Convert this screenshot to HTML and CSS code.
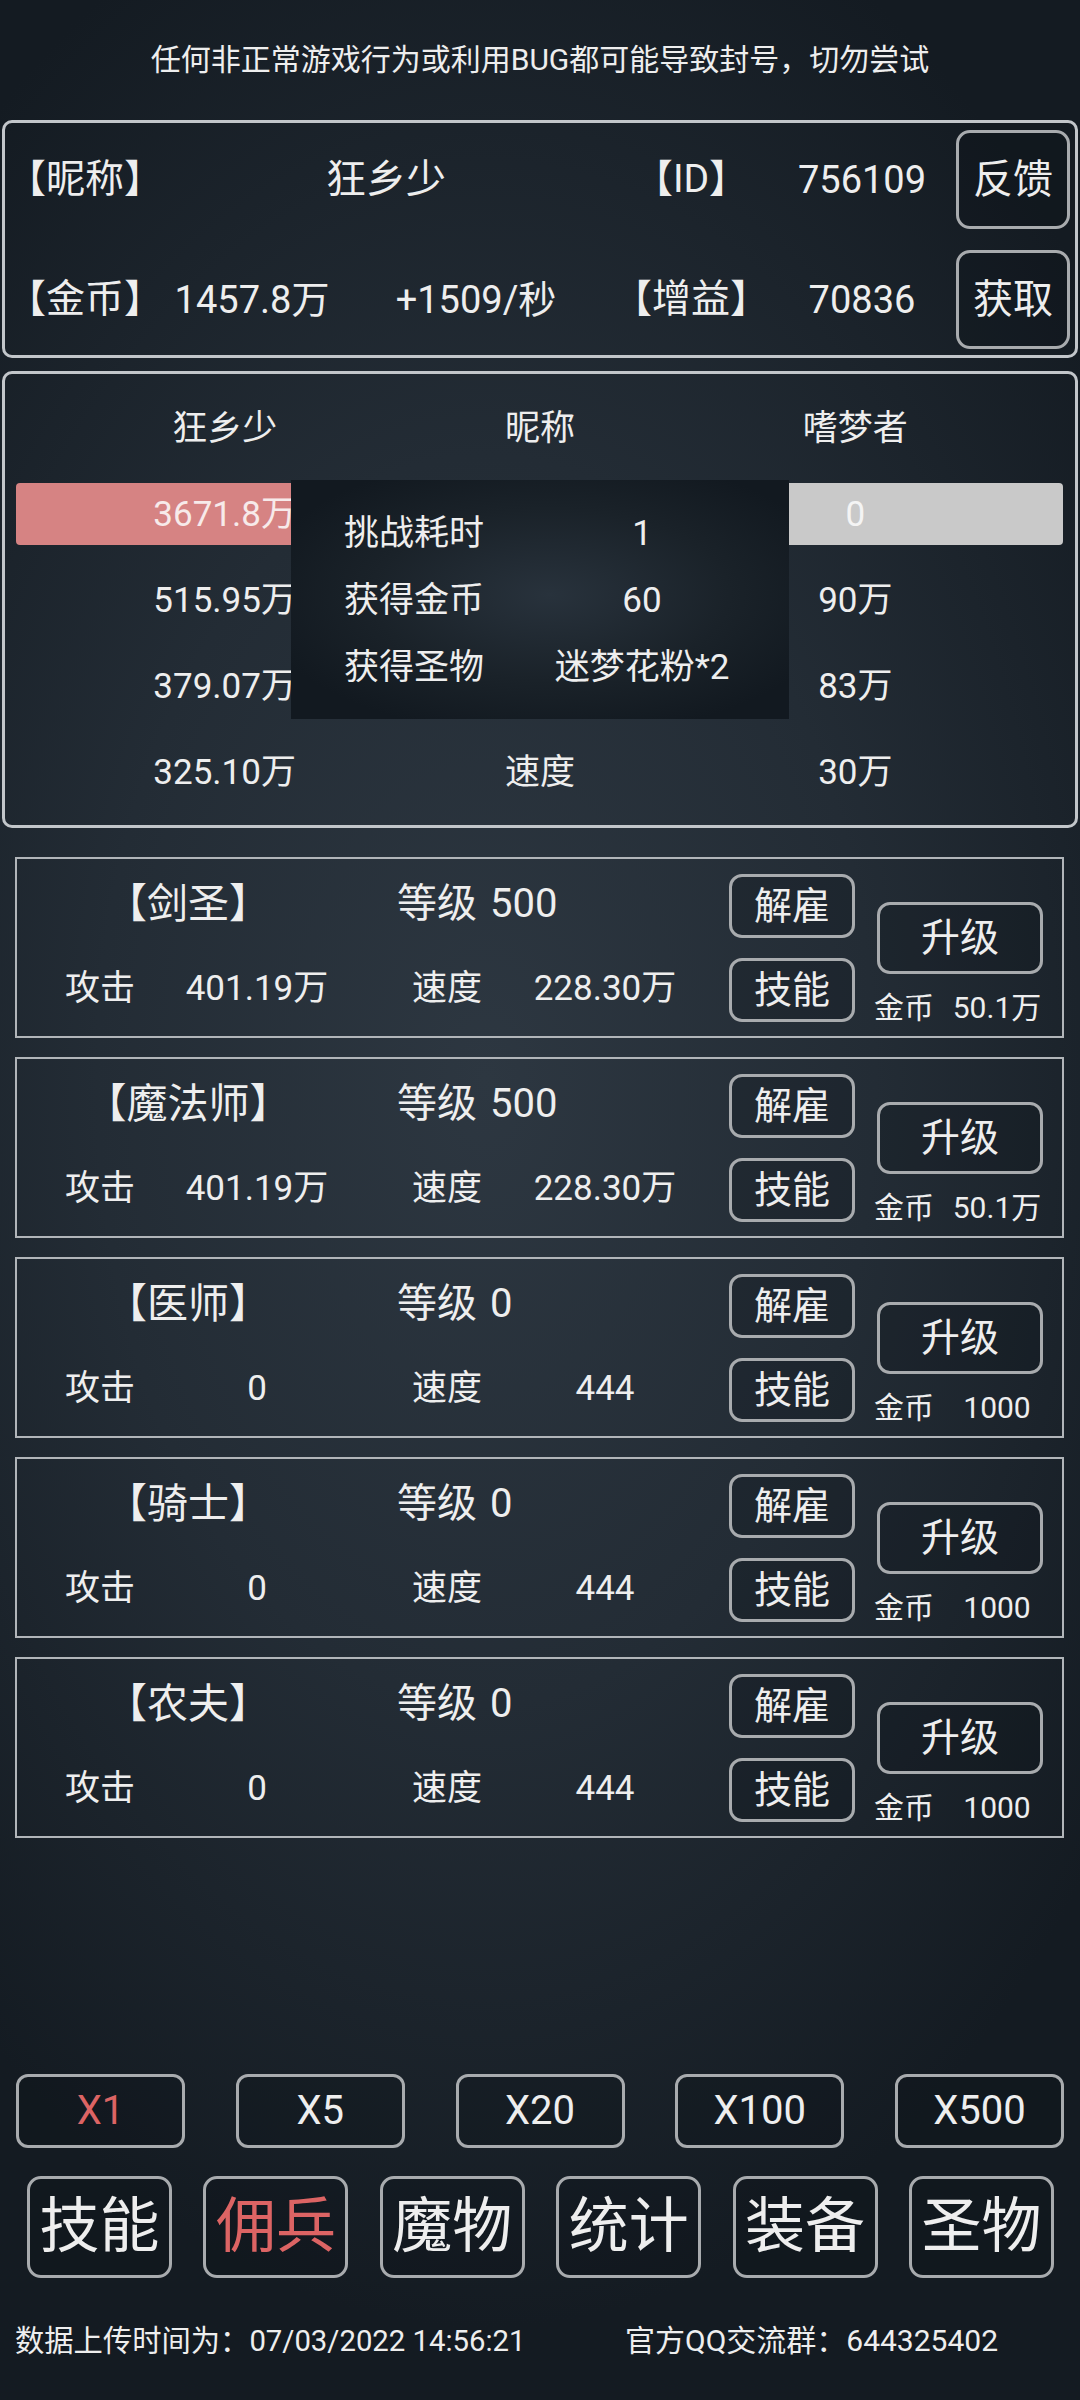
FILE: index.html
```html
<!DOCTYPE html>
<html lang="zh-CN">
<head>
<meta charset="utf-8">
<title>佣兵</title>
<link rel="stylesheet" href="styles.css">
</head>
<body>
<div class="screen">
  <div class="notice">任何非正常游戏行为或利用BUG都可能导致封号，切勿尝试</div>

  <div class="info">
    <div class="c1">【昵称】</div>
    <div class="name">狂乡少</div>
    <div class="c4">【ID】</div>
    <div class="c5">756109</div>
    <div class="c6"><div class="btn btn-side">反馈</div></div>
    <div class="c1">【金币】</div>
    <div class="c2">1457.8万</div>
    <div class="c3">+1509/秒</div>
    <div class="c4">【增益】</div>
    <div class="c5">70836</div>
    <div class="c6"><div class="btn btn-side">获取</div></div>
  </div>

  <div class="battle">
    <div class="brow bhead"><div>狂乡少</div><div>昵称</div><div>嗜梦者</div></div>
    <div class="brow bar"><div class="me">3671.8万</div><div></div><div class="foe">0</div></div>
    <div class="brow stat first"><div>515.95万</div><div></div><div>90万</div></div>
    <div class="brow stat"><div>379.07万</div><div></div><div>83万</div></div>
    <div class="brow stat"><div>325.10万</div><div>速度</div><div>30万</div></div>
    <div class="result">
      <div>挑战耗时</div><div class="v">1</div>
      <div>获得金币</div><div class="v">60</div>
      <div>获得圣物</div><div class="v">迷梦花粉*2</div>
    </div>
  </div>

  <div class="heroes">
    <div class="hero">
      <div class="hero-main">
        <div class="hero-top"><div class="hero-name">【剑圣】</div><div class="hero-level"><span>等级</span><span>500</span></div></div>
        <div class="hero-stats"><div>攻击</div><div>401.19万</div><div>速度</div><div>228.30万</div></div>
      </div>
      <div class="hero-btns"><div class="btn">解雇</div><div class="btn">技能</div></div>
      <div class="hero-up"><div class="btn">升级</div><div class="cost"><span class="lbl">金币</span><span class="val">50.1万</span></div></div>
    </div>
    <div class="hero">
      <div class="hero-main">
        <div class="hero-top"><div class="hero-name">【魔法师】</div><div class="hero-level"><span>等级</span><span>500</span></div></div>
        <div class="hero-stats"><div>攻击</div><div>401.19万</div><div>速度</div><div>228.30万</div></div>
      </div>
      <div class="hero-btns"><div class="btn">解雇</div><div class="btn">技能</div></div>
      <div class="hero-up"><div class="btn">升级</div><div class="cost"><span class="lbl">金币</span><span class="val">50.1万</span></div></div>
    </div>
    <div class="hero">
      <div class="hero-main">
        <div class="hero-top"><div class="hero-name">【医师】</div><div class="hero-level"><span>等级</span><span>0</span></div></div>
        <div class="hero-stats"><div>攻击</div><div>0</div><div>速度</div><div>444</div></div>
      </div>
      <div class="hero-btns"><div class="btn">解雇</div><div class="btn">技能</div></div>
      <div class="hero-up"><div class="btn">升级</div><div class="cost"><span class="lbl">金币</span><span class="val">1000</span></div></div>
    </div>
    <div class="hero">
      <div class="hero-main">
        <div class="hero-top"><div class="hero-name">【骑士】</div><div class="hero-level"><span>等级</span><span>0</span></div></div>
        <div class="hero-stats"><div>攻击</div><div>0</div><div>速度</div><div>444</div></div>
      </div>
      <div class="hero-btns"><div class="btn">解雇</div><div class="btn">技能</div></div>
      <div class="hero-up"><div class="btn">升级</div><div class="cost"><span class="lbl">金币</span><span class="val">1000</span></div></div>
    </div>
    <div class="hero">
      <div class="hero-main">
        <div class="hero-top"><div class="hero-name">【农夫】</div><div class="hero-level"><span>等级</span><span>0</span></div></div>
        <div class="hero-stats"><div>攻击</div><div>0</div><div>速度</div><div>444</div></div>
      </div>
      <div class="hero-btns"><div class="btn">解雇</div><div class="btn">技能</div></div>
      <div class="hero-up"><div class="btn">升级</div><div class="cost"><span class="lbl">金币</span><span class="val">1000</span></div></div>
    </div>
  </div>

  <div class="bottom">
    <div class="mults">
      <div class="btn red">X1</div>
      <div class="btn">X5</div>
      <div class="btn">X20</div>
      <div class="btn">X100</div>
      <div class="btn">X500</div>
    </div>
    <div class="navs">
      <div class="btn">技能</div>
      <div class="btn red">佣兵</div>
      <div class="btn">魔物</div>
      <div class="btn">统计</div>
      <div class="btn">装备</div>
      <div class="btn">圣物</div>
    </div>
    <div class="footer">
      <div class="upload">数据上传时间为：07/03/2022 14:56:21</div>
      <div class="qq">官方QQ交流群：644325402</div>
    </div>
  </div>
</div>
</body>
</html>
```

FILE: styles.css
```css
* {
  box-sizing: border-box;
  margin: 0;
  padding: 0;
}

html, body {
  width: 1080px;
  height: 2400px;
}

body {
  font-family: Roboto, "Noto Sans CJK SC", sans-serif;
  color: #eeeeee;
  background-color: #151c23;
  background-image: radial-gradient(ellipse 72% 52% at 45% 45%, #2d3741 0%, #232c35 50%, #141b22 100%);
  overflow: hidden;
}

.screen {
  width: 1080px;
  height: 2400px;
  display: flex;
  flex-direction: column;
}

.notice {
  height: 120px;
  display: flex;
  align-items: center;
  justify-content: center;
  font-size: 30px;
  line-height: 1;
}

.btn {
  display: flex;
  align-items: center;
  justify-content: center;
  border: 3px solid #a8abae;
  border-radius: 13px;
  background: rgba(8, 12, 16, 0.18);
  line-height: 1;
  white-space: nowrap;
}

.red {
  color: #dc6464;
}

/* info panel */
.info {
  margin: 0 2px;
  border: 3px solid #c2c6ca;
  border-radius: 10px;
  display: grid;
  grid-template-columns: 160px 174px 274px 156px 186px 1fr;
  grid-template-rows: 99px 99px;
  row-gap: 21px;
  padding: 7px 0 6px;
  align-items: center;
  font-size: 38px;
  line-height: 1;
  white-space: nowrap;
}

.info .c1 {
  padding-left: 2px;
  font-size: 39px;
}

.info .name {
  grid-column: 2 / span 2;
  text-align: center;
  padding-right: 6px;
  font-size: 40px;
}

.info .c2,
.info .c3,
.info .c4,
.info .c5 {
  text-align: center;
}

.info .c4 {
  font-size: 39px;
}

.info .c6 {
  align-self: stretch;
  padding-left: 1px;
}

.btn-side {
  width: 114px;
  height: 99px;
  font-size: 40px;
  border-radius: 14px;
}

/* battle panel */
.battle {
  position: relative;
  margin: 13px 2px 0;
  border: 3px solid #c2c6ca;
  border-radius: 10px;
  padding-bottom: 10px;
  font-size: 35px;
  line-height: 1;
  white-space: nowrap;
}

.brow {
  display: grid;
  grid-template-columns: repeat(3, 1fr);
  padding: 0 62px;
  align-items: center;
  text-align: center;
}

.bhead {
  height: 109px;
}

.bar {
  margin: 0 12px 0 11px;
  height: 62px;
  padding: 0 50px 0 51px;
  border-radius: 4px;
  background: linear-gradient(to right, #d68383 50%, #c9c9c9 50%);
}

.bar .me {
  color: #f7eaea;
}

.bar .foe {
  color: #f4f4f4;
}

.stat {
  height: 86px;
}

.stat.first {
  margin-top: 12px;
}

.result {
  position: absolute;
  left: 286px;
  top: 106px;
  width: 498px;
  height: 239px;
  padding: 20px 0 0 53px;
  display: grid;
  grid-template-columns: 150px 296px;
  grid-auto-rows: 67px;
  align-items: center;
  background: radial-gradient(ellipse 60% 60% at 52% 48%, #28323c 0%, #1a2229 60%, #121920 100%);
  font-size: 35px;
  line-height: 1;
}

.result .v {
  text-align: center;
}

/* hero cards */
.heroes {
  margin-top: 29px;
  padding: 0 16px 0 15px;
  display: flex;
  flex-direction: column;
  gap: 19px;
}

.hero {
  height: 181px;
  border: 2px solid #b1b5b9;
  display: flex;
}

.hero-main {
  width: 712px;
  padding-top: 3px;
  white-space: nowrap;
}

.hero-top {
  height: 84px;
  display: flex;
  align-items: center;
  font-size: 40px;
  line-height: 1;
}

.hero-name {
  margin-left: 35px;
  width: 272px;
  text-align: center;
  font-size: 41px;
}

.hero-level {
  margin-left: 73px;
  display: flex;
  gap: 13px;
}

.hero-stats {
  height: 84px;
  display: grid;
  grid-template-columns: 80px 234px 146px 170px;
  padding-left: 43px;
  align-items: center;
  text-align: center;
  font-size: 35px;
  line-height: 1;
}

.hero-btns {
  width: 126px;
  display: flex;
  flex-direction: column;
  justify-content: center;
  gap: 20px;
}

.hero-btns .btn {
  height: 64px;
  font-size: 38px;
}

.hero-up {
  margin-left: 22px;
  width: 166px;
  padding-top: 43px;
}

.hero-up .btn {
  height: 72px;
  font-size: 39px;
}

.cost {
  margin-top: 16px;
  margin-left: -3px;
  height: 36px;
  display: flex;
  align-items: center;
  font-size: 30px;
  line-height: 1;
  white-space: nowrap;
}

.cost .lbl {
  width: 62px;
  flex-shrink: 0;
}

.cost .val {
  width: 122px;
  flex-shrink: 0;
  text-align: center;
}

/* bottom */
.bottom {
  margin-top: auto;
}

.mults {
  display: flex;
  justify-content: space-between;
  padding: 0 16px;
  height: 74px;
}

.mults .btn {
  width: 169px;
  height: 74px;
  font-size: 40px;
  border-radius: 12px;
}

.navs {
  margin-top: 28px;
  display: flex;
  justify-content: space-between;
  padding: 0 26px 0 27px;
}

.navs .btn {
  width: 145px;
  height: 102px;
  font-size: 60px;
  border-radius: 14px;
}

.footer {
  height: 122px;
  padding: 46px 0 0 15px;
  display: grid;
  grid-template-columns: 610px auto;
  align-content: start;
  font-size: 30px;
  line-height: 34px;
  white-space: nowrap;
}

.footer .upload {
  font-size: 29.3px;
}
```
